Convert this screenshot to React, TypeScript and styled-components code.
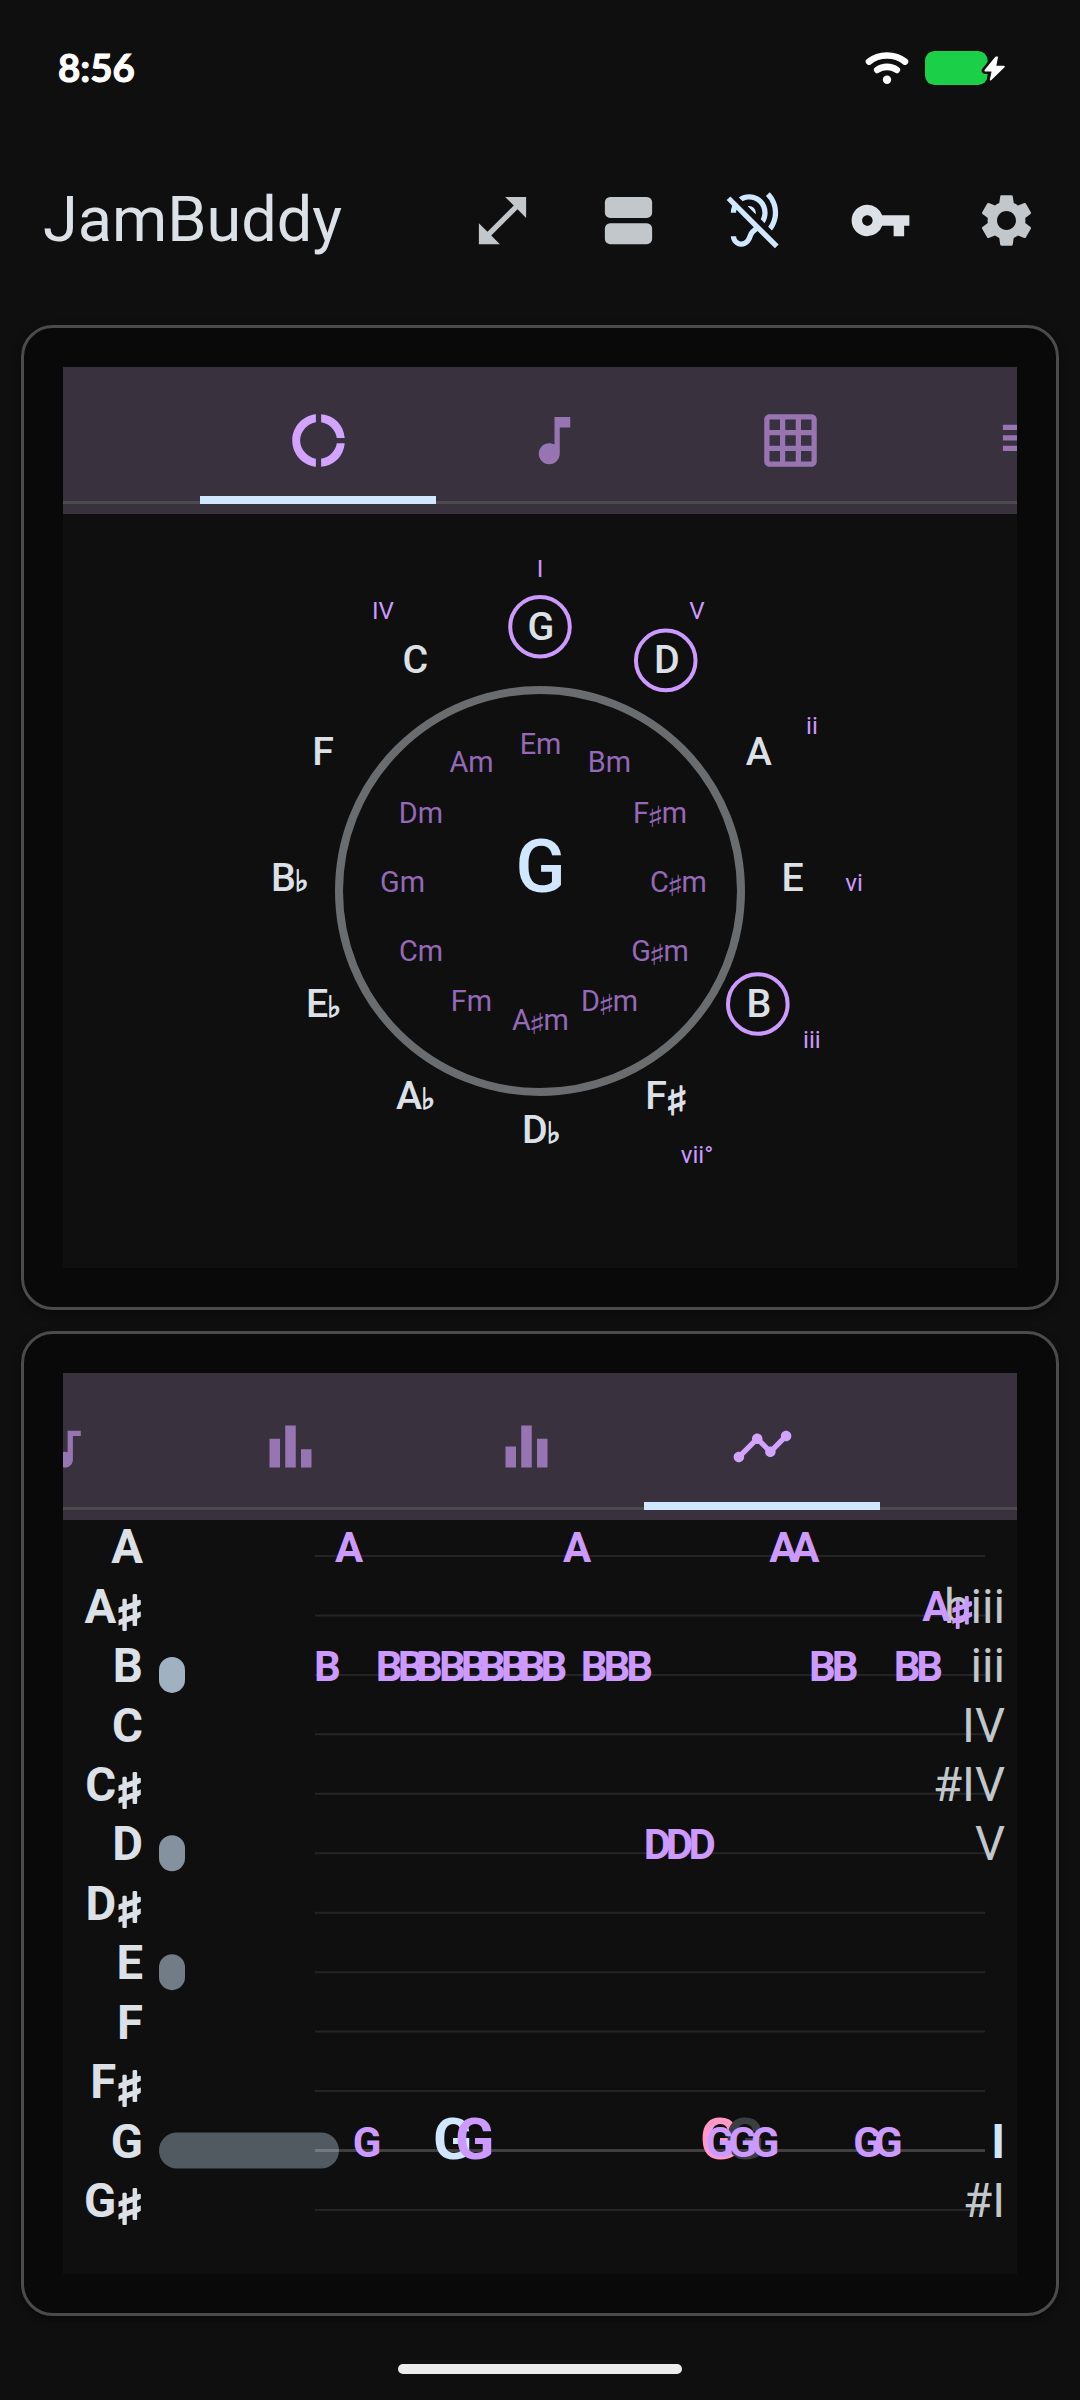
import React from 'react';
import styled, { createGlobalStyle } from 'styled-components';
import type { IconType } from 'react-icons';
import {
  MdBarChart,
  MdDonutLarge,
  MdEqualizer,
  MdGridOn,
  MdHearingDisabled,
  MdMusicNote,
  MdOpenInFull,
  MdQueueMusic,
  MdSettings,
  MdTimeline,
  MdVpnKey,
} from 'react-icons/md';

const color = {
  background: '#0f0f0f',
  card: '#090909',
  outline: '#4b4b4b',
  tabs: '#39323e',
  text: '#dce1e8',
  muted: '#c2c7cb',
  accent: '#d1e7ff',
  purple: '#cc99ff',
  purpleActive: '#d2a3ff',
  purpleDim: '#9775b2',
  minor: '#9469b8',
  ring: '#6a6d70',
};

const GlobalStyle = createGlobalStyle`
  *, *::before, *::after { box-sizing: border-box; }
  body {
    margin: 0;
    background: ${color.background};
    font-family: Roboto, "Noto Sans", sans-serif;
  }
`;

const Screen = styled.div`
  display: flex;
  flex-direction: column;
  width: 1080px;
  height: 2400px;
  overflow: hidden;
  background: ${color.background};
  color: ${color.text};
`;

const StatusBar = styled.div`
  display: flex;
  align-items: center;
  justify-content: space-between;
  flex: 0 0 136px;
  padding: 0 74px 0 58px;
`;

const Clock = styled.span`
  padding-bottom: 2px;
  font: 700 38.5px/44px Lato, Roboto, sans-serif;
  color: #fff;
  -webkit-text-stroke: 1px #fff;
`;

const StatusIcons = styled.div`
  display: flex;
  align-items: center;
  gap: 16px;
`;

const AppBar = styled.header`
  display: flex;
  align-items: center;
  justify-content: space-between;
  flex: 0 0 168px;
  padding: 0 11px 0 43px;
`;

const Title = styled.h1`
  margin: 0;
  font-size: 63px;
  line-height: 74px;
  font-weight: 400;
`;

const Actions = styled.div`
  display: flex;
`;

const ActionButton = styled.button<{ $tint: string }>`
  display: flex;
  align-items: center;
  justify-content: center;
  width: 126px;
  height: 126px;
  padding: 0;
  border: 0;
  background: none;
  color: ${(p) => p.$tint};
  svg { display: block; }
`;

const Main = styled.main`
  display: flex;
  flex-direction: column;
  gap: 21px;
  padding: 21px;
  flex: 1;
`;

const Card = styled.section`
  flex: 0 0 985px;
  padding: 39px;
  border: 3px solid ${color.outline};
  border-radius: 32px;
  background: ${color.card};
  box-shadow: 0 3px 8px rgba(0, 0, 0, 0.45);
`;

const Panel = styled.div`
  display: flex;
  flex-direction: column;
  width: 954px;
  height: 901px;
  overflow: hidden;
  background: ${color.background};
`;

const TabStrip = styled.div<{ $end?: boolean }>`
  position: relative;
  display: flex;
  flex: 0 0 147px;
  justify-content: ${(p) => (p.$end ? 'flex-end' : 'flex-start')};
  padding: 0 137px;
  overflow: hidden;
  background: ${color.tabs};
`;

const Divider = styled.div`
  position: absolute;
  left: 0;
  right: 0;
  bottom: 10px;
  height: 3px;
  background: ${color.outline};
`;

const Tab = styled.div<{ $active?: boolean }>`
  position: relative;
  display: flex;
  align-items: center;
  justify-content: center;
  flex: 0 0 236px;
  padding-left: 1px;
  color: ${(p) => (p.$active ? color.purpleActive : color.purpleDim)};
  &::after {
    content: "";
    display: ${(p) => (p.$active ? 'block' : 'none')};
    position: absolute;
    left: 0;
    right: 0;
    bottom: 10px;
    height: 8px;
    background: ${color.accent};
  }
`;

const Canvas = styled.svg`
  display: block;
  flex: 0 0 754px;
  width: 954px;
  font-family: Roboto, sans-serif;
`;

const NavBar = styled.footer`
  display: flex;
  align-items: center;
  justify-content: center;
  flex: 0 0 63px;
`;

const Pill = styled.div`
  width: 284px;
  height: 10px;
  border-radius: 5px;
  background: #ececec;
`;

const Wifi = () => (
  <svg width="44" height="34" viewBox="0 0 44 34" fill="none" stroke="#fff" strokeWidth="6.6" strokeLinecap="round">
    <path d="M4 10.6C14 2.4 30 2.4 40 10.6" />
    <path d="M12.2 18.9C18 14.8 26 14.8 31.8 18.9" />
    <circle cx="22" cy="28.8" r="4.2" fill="#fff" stroke="none" />
  </svg>
);

const BOLT = 'M71 6.2L60.2 19.6H67.6L65.6 28.6L79 15.6H70.4L72.2 6.2Z';

const Battery = () => (
  <svg width="81" height="34" viewBox="0 0 81 34">
    <rect width="62.6" height="34" rx="9.5" fill="#1ccf49" />
    <path d={BOLT} fill="#0f0f0f" stroke="#0f0f0f" strokeWidth="7" strokeLinejoin="round" />
    <path d={BOLT} fill="#fff" stroke="#fff" strokeWidth="1.6" strokeLinejoin="round" />
  </svg>
);

const SplitView = ({ size }: { size: number }) => (
  <svg width={size} height={size} viewBox="0 0 24 24" fill="currentColor">
    <rect x="3" y="3" width="18" height="8" rx="2" />
    <rect x="3" y="13" width="18" height="8" rx="2" />
  </svg>
);

const Accidental = styled.tspan<{ $size: number; $spacing: number; $stroke: number; $fill: string }>`
  font-family: "DejaVu Sans", sans-serif;
  font-weight: 400;
  font-size: ${(p) => p.$size}px;
  letter-spacing: ${(p) => p.$spacing}px;
  stroke: ${(p) => p.$fill};
  stroke-width: ${(p) => p.$stroke}px;
`;

const Label = styled.text<{ $size: number; $weight: number; $fill: string; $anchor: string }>`
  font-size: ${(p) => p.$size}px;
  font-weight: ${(p) => p.$weight};
  fill: ${(p) => p.$fill};
  text-anchor: ${(p) => p.$anchor};
`;

type ChartTextProps = {
  x: number;
  y: number;
  size: number;
  fill: string;
  weight?: number;
  anchor?: 'start' | 'middle' | 'end';
  children: string;
};

// Sharps are widened and hang below the baseline; flats are drawn smaller and sit on it.
const ChartText = ({ x, y, size, fill, weight = 400, anchor = 'middle', children }: ChartTextProps) => {
  const sharpWidth = weight === 700 ? 0.63 : weight === 500 ? 0.6 : 0.6;
  const kern = weight === 700 ? -0.03 : weight === 500 ? -0.055 : -0.08;
  const stroke = weight === 700 ? 0.045 : weight === 500 ? 0.03 : 0;
  let drop = 0;
  return (
    <Label x={x} y={y} $size={size} $weight={weight} $fill={fill} $anchor={anchor}>
      {children.split(/([♯♭])/).filter(Boolean).map((part, i) => {
        if (part === '♯') {
          drop = size * 0.155;
          return (
            <Accidental
              key={i}
              dx={size * kern}
              dy={drop}
              textLength={size * sharpWidth}
              lengthAdjust="spacingAndGlyphs"
              $size={size * 1.01}
              $spacing={0}
              $stroke={size * stroke}
              $fill={fill}
            >
              {part}
            </Accidental>
          );
        }
        if (part === '♭') {
          return (
            <Accidental
              key={i}
              dx={size * -0.02}
              $size={size * 0.74}
              $spacing={size * -0.02}
              $stroke={size * stroke}
              $fill={fill}
            >
              {part}
            </Accidental>
          );
        }
        const lift = -drop;
        const pull = drop ? size * kern : 0;
        drop = 0;
        return <tspan key={i} dx={pull} dy={lift}>{part}</tspan>;
      })}
    </Label>
  );
};

const majors = ['G', 'D', 'A', 'E', 'B', 'F♯', 'D♭', 'A♭', 'E♭', 'B♭', 'F', 'C'];
const minors = ['Em', 'Bm', 'F♯m', 'C♯m', 'G♯m', 'D♯m', 'A♯m', 'Fm', 'Cm', 'Gm', 'Dm', 'Am'];
const degrees = ['I', 'V', 'ii', 'vi', 'iii', 'vii°', '', '', '', '', '', 'IV'];
const played = ['G', 'D', 'B'];

const around = (i: number, radius: number) => {
  const a = (i * Math.PI) / 6;
  return { x: 477 + radius * Math.sin(a), y: 377 - radius * Math.cos(a) };
};

const CircleOfFifths = () => (
  <Canvas viewBox="0 0 954 754">
    <circle cx="477" cy="377" r="201" fill="none" stroke={color.ring} strokeWidth="8" />
    {majors.map((name, i) => {
      const p = around(i, 251.5);
      return (
        <g key={name}>
          {played.includes(name) && (
            <circle cx={p.x} cy={p.y - 12.8} r="29.8" fill="none" stroke={color.purple} strokeWidth="4" />
          )}
          <ChartText x={p.x + 1} y={p.y} size={39.375} weight={500} fill={color.text}>
            {name}
          </ChartText>
        </g>
      );
    })}
    {minors.map((name, i) => {
      const p = around(i, 138);
      return (
        <ChartText key={name} x={p.x + 0.5} y={p.y + 0.5} size={28.875} fill={color.minor}>
          {name}
        </ChartText>
      );
    })}
    {degrees.map((name, i) => {
      const p = around(i, 314);
      return name ? (
        <ChartText key={name} x={p.x} y={p.y} size={24.2} fill={color.purple}>
          {name}
        </ChartText>
      ) : null;
    })}
    <ChartText x={477.5} y={377.5} size={73.5} weight={500} fill={color.accent}>
      G
    </ChartText>
  </Canvas>
);

type Row = { note: string; degree?: string; bar?: { width: number; fill: string } };

const rows: Row[] = [
  { note: 'A' },
  { note: 'A♯', degree: 'biii' },
  { note: 'B', degree: 'iii', bar: { width: 26, fill: '#a0b1c1' } },
  { note: 'C', degree: 'IV' },
  { note: 'C♯', degree: '#IV' },
  { note: 'D', degree: 'V', bar: { width: 26, fill: '#84919e' } },
  { note: 'D♯' },
  { note: 'E', bar: { width: 26, fill: '#717c87' } },
  { note: 'F' },
  { note: 'F♯' },
  { note: 'G', degree: 'I', bar: { width: 180, fill: '#525a61' } },
  { note: 'G♯', degree: '#I' },
];

type Hit = { row: number; x: number; big?: boolean; fill?: string };

const at = (row: number, xs: number[]): Hit[] => xs.map((x) => ({ row, x }));

const hits: Hit[] = [
  ...at(0, [272, 500, 706.3, 728.3]),
  ...at(1, [859.3]),
  ...at(2, [251, 312.7, 334.7, 353, 376, 397.7, 416, 437.7, 455.8, 477.6, 517.8, 540.5, 563.2, 746.1, 768.8, 830.8, 853.2]),
  ...at(5, [580.8, 602.8, 625.6]),
  { row: 10, x: 370, big: true, fill: color.accent },
  { row: 10, x: 392, big: true },
  { row: 10, x: 637, big: true, fill: '#ff99c6' },
  { row: 10, x: 662, big: true, fill: '#3a3e41' },
  ...at(10, [289.8, 642.2, 665.2, 687.7, 790.2, 811]),
];

const lineY = (row: number) => 36 + row * 59.45;

const NoteTimeline = () => (
  <Canvas viewBox="0 0 954 754">
    {rows.map(({ note, bar }, i) => (
      <g key={note}>
        {bar && (
          <rect x="96" y={lineY(i) - 18} width={bar.width} height="36" rx={Math.min(18, bar.width / 2)} fill={bar.fill} />
        )}
        <line
          x1="252"
          x2="922"
          y1={lineY(i)}
          y2={lineY(i)}
          stroke="#fff"
          strokeOpacity={note === 'G' ? 0.2 : 0.09}
          strokeWidth={note === 'G' ? 3 : 2}
        />
      </g>
    ))}
    {rows.map(({ note, degree }, i) => (
      <g key={note}>
        <ChartText
          x={note.endsWith('♯') ? 81.6 : 80}
          y={lineY(i) + 7.2}
          size={47.25}
          weight={700}
          fill={color.text}
          anchor="end"
        >
          {note}
        </ChartText>
        {degree && (
          <ChartText
            x={942}
            y={lineY(i) + 7.2}
            size={47.25}
            weight={degree === 'I' ? 700 : 400}
            fill={degree === 'I' ? color.accent : color.muted}
            anchor="end"
          >
            {degree}
          </ChartText>
        )}
      </g>
    ))}
    {hits.map((hit, i) => (
      <ChartText
        key={i}
        x={hit.x}
        y={lineY(hit.row) + (hit.big ? 8.5 : 6)}
        size={hit.big ? 57.75 : 42}
        weight={700}
        fill={hit.fill ?? color.purple}
        anchor="start"
      >
        {rows[hit.row].note}
      </ChartText>
    ))}
  </Canvas>
);

const Tabs = ({ icons, active, end }: { icons: IconType[]; active: number; end?: boolean }) => (
  <TabStrip $end={end}>
    <Divider />
    {icons.map((Icon, i) => (
      <Tab key={i} $active={i === active}>
        <Icon size={63} />
      </Tab>
    ))}
  </TabStrip>
);

export default function App() {
  return (
    <Screen>
      <GlobalStyle />
      <StatusBar>
        <Clock>8:56</Clock>
        <StatusIcons>
          <Wifi />
          <Battery />
        </StatusIcons>
      </StatusBar>
      <AppBar>
        <Title>JamBuddy</Title>
        <Actions>
          <ActionButton $tint={color.muted}><MdOpenInFull size={63} /></ActionButton>
          <ActionButton $tint={color.muted}><SplitView size={63} /></ActionButton>
          <ActionButton $tint={color.accent}><MdHearingDisabled size={63} /></ActionButton>
          <ActionButton $tint={color.text}><MdVpnKey size={63} /></ActionButton>
          <ActionButton $tint={color.muted}><MdSettings size={63} /></ActionButton>
        </Actions>
      </AppBar>
      <Main>
        <Card>
          <Panel>
            <Tabs icons={[MdDonutLarge, MdMusicNote, MdGridOn, MdQueueMusic]} active={0} />
            <CircleOfFifths />
          </Panel>
        </Card>
        <Card>
          <Panel>
            <Tabs icons={[MdQueueMusic, MdBarChart, MdEqualizer, MdTimeline]} active={3} end />
            <NoteTimeline />
          </Panel>
        </Card>
      </Main>
      <NavBar>
        <Pill />
      </NavBar>
    </Screen>
  );
}
